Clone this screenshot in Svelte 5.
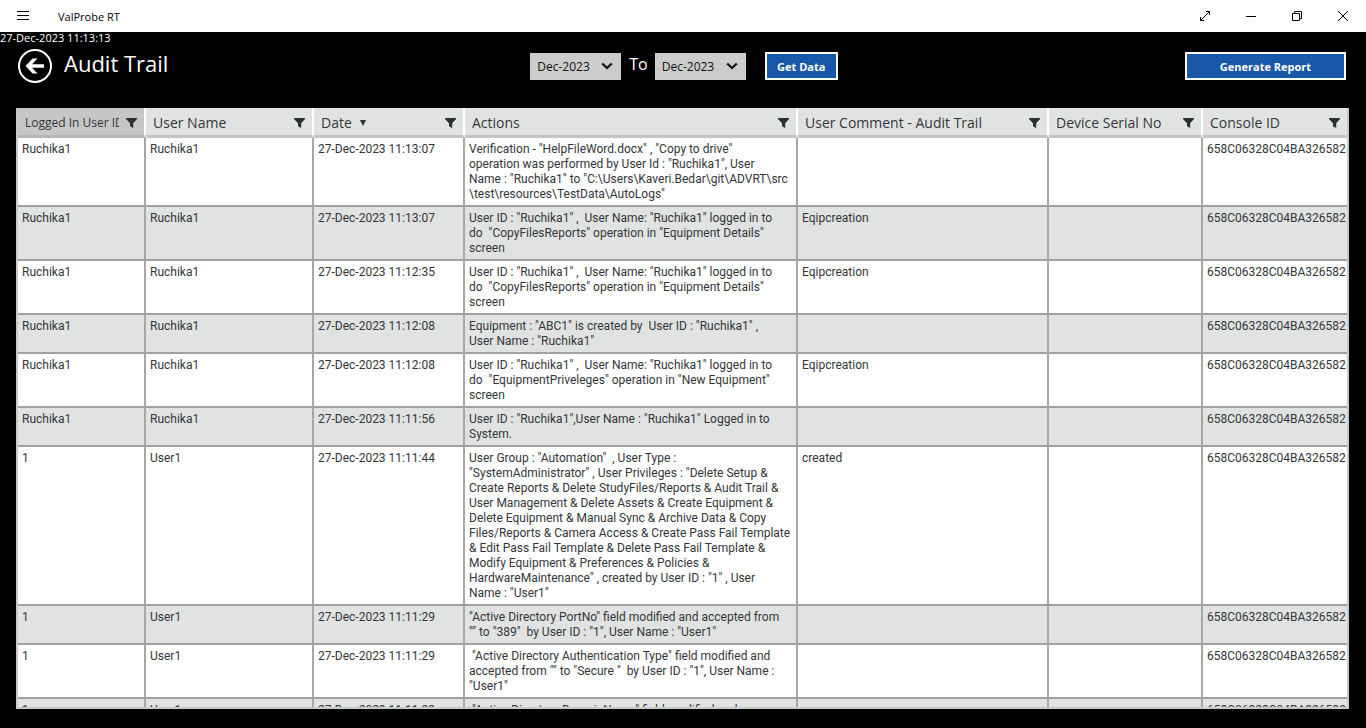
<script>
  const months = ['Oct-2023', 'Nov-2023', 'Dec-2023'];
  let from = $state('Dec-2023');
  let to = $state('Dec-2023');

  const columns = [
    { name: 'Logged In User ID', cls: 'c-id', active: true },
    { name: 'User Name', cls: 'c-name' },
    { name: 'Date', cls: 'c-date', sorted: true },
    { name: 'Actions', cls: 'c-actions' },
    { name: 'User Comment - Audit Trail', cls: 'c-comment' },
    { name: 'Device Serial No', cls: 'c-serial' },
    { name: 'Console ID', cls: 'c-console' }
  ];

  const consoleId = '658C06328C04BA326582';

  const rows = [
    { id: 'Ruchika1', user: 'Ruchika1', time: '11:13:07', comment: '', action: [
      'Verification - "HelpFileWord.docx" , "Copy to drive"',
      'operation was performed by User Id : "Ruchika1", User',
      'Name : "Ruchika1" to "C:\\Users\\Kaveri.Bedar\\git\\ADVRT\\src',
      '\\test\\resources\\TestData\\AutoLogs"'
    ] },
    { id: 'Ruchika1', user: 'Ruchika1', time: '11:13:07', comment: 'Eqipcreation', action: [
      'User ID : "Ruchika1" ,  User Name: "Ruchika1" logged in to',
      'do  "CopyFilesReports" operation in "Equipment Details"',
      'screen'
    ] },
    { id: 'Ruchika1', user: 'Ruchika1', time: '11:12:35', comment: 'Eqipcreation', action: [
      'User ID : "Ruchika1" ,  User Name: "Ruchika1" logged in to',
      'do  "CopyFilesReports" operation in "Equipment Details"',
      'screen'
    ] },
    { id: 'Ruchika1', user: 'Ruchika1', time: '11:12:08', comment: '', action: [
      'Equipment : "ABC1" is created by  User ID : "Ruchika1" ,',
      'User Name : "Ruchika1"'
    ] },
    { id: 'Ruchika1', user: 'Ruchika1', time: '11:12:08', comment: 'Eqipcreation', action: [
      'User ID : "Ruchika1" ,  User Name: "Ruchika1" logged in to',
      'do  "EquipmentPriveleges" operation in "New Equipment"',
      'screen'
    ] },
    { id: 'Ruchika1', user: 'Ruchika1', time: '11:11:56', comment: '', action: [
      'User ID : "Ruchika1",User Name : "Ruchika1" Logged in to',
      'System.'
    ] },
    { id: '1', user: 'User1', time: '11:11:44', comment: 'created', action: [
      'User Group : "Automation"  , User Type :',
      '"SystemAdministrator" , User Privileges : "Delete Setup &',
      'Create Reports & Delete StudyFiles/Reports & Audit Trail &',
      'User Management & Delete Assets & Create Equipment &',
      'Delete Equipment & Manual Sync & Archive Data & Copy',
      'Files/Reports & Camera Access & Create Pass Fail Template',
      '& Edit Pass Fail Template & Delete Pass Fail Template &',
      'Modify Equipment & Preferences & Policies &',
      'HardwareMaintenance" , created by User ID : "1" , User',
      'Name : "User1"'
    ] },
    { id: '1', user: 'User1', time: '11:11:29', comment: '', action: [
      '"Active Directory PortNo" field modified and accepted from',
      '"" to "389"  by User ID : "1", User Name : "User1"'
    ] },
    { id: '1', user: 'User1', time: '11:11:29', comment: '', action: [
      ' "Active Directory Authentication Type" field modified and',
      'accepted from "" to "Secure "  by User ID : "1", User Name :',
      '"User1"'
    ] },
    { id: '1', user: 'User1', time: '11:11:29', comment: '', action: [
      ' "Active Directory DomainName" field modified and',
      'accepted from "" to ""  by User ID : "1", User Name : "User1"'
    ] }
  ];
</script>

{#snippet chevron()}
  <svg class="chevron" width="12" height="8" viewBox="0 0 12 8" aria-hidden="true">
    <path d="M1.2 1.5 6 6 10.8 1.5" fill="none" stroke="#111" stroke-width="2.2" />
  </svg>
{/snippet}

<div class="app">
  <header class="titlebar">
    <button class="menu" aria-label="Menu">
      <svg width="12" height="10" viewBox="0 0 12 10" shape-rendering="crispEdges">
        <path d="M0 .5h12M0 4.5h12M0 8.5h12" stroke="#000" />
      </svg>
    </button>
    <span class="app-name">ValProbe RT</span>
    <div class="window-controls">
      <button aria-label="Full screen">
        <svg width="12" height="12" viewBox="0 0 12 12">
          <path d="M1.500 10.500 10.500 1.500M7 1.500h3.500V5M1.500 7v3.500H5" fill="none" stroke="#000" />
        </svg>
      </button>
      <button aria-label="Minimize">
        <svg width="10" height="10" viewBox="0 0 10 10"><path d="M0 5.5h10" stroke="#000" /></svg>
      </button>
      <button aria-label="Restore">
        <svg width="10" height="10" viewBox="0 0 10 10">
          <path d="M.5 2.5h7v7h-7zM2.500 2.500v-2h7v7h-2" fill="none" stroke="#000" />
        </svg>
      </button>
      <button aria-label="Close">
        <svg width="10" height="10" viewBox="0 0 10 10"><path d="M0 0 10 10M10 0 0 10" stroke="#000" /></svg>
      </button>
    </div>
  </header>

  <time class="clock">27-Dec-2023 11:13:13</time>

  <div class="toolbar">
    <div class="heading">
      <button class="back" aria-label="Back">
        <svg width="34" height="34" viewBox="0 0 34 34">
          <circle cx="17" cy="17" r="16" fill="none" stroke="#fff" stroke-width="2" />
          <path d="M7.500 17 14.500 9.500H19.500L14 15.200H26V18.800H14L19.500 24.500H14.500z" fill="#fff" />
        </svg>
      </button>
      <h1>Audit Trail</h1>
    </div>
    <div class="range">
      <span class="select">
        <select aria-label="From month" bind:value={from}>
          {#each months as m}<option>{m}</option>{/each}
        </select>
        {@render chevron()}
      </span>
      <label class="to" for="to-month">To</label>
      <span class="select">
        <select id="to-month" bind:value={to}>
          {#each months as m}<option>{m}</option>{/each}
        </select>
        {@render chevron()}
      </span>
      <button class="primary get">Get Data</button>
    </div>
    <button class="primary report">Generate Report</button>
  </div>

  <main class="grid">
    <table>
      <colgroup>
        {#each columns as c}<col class={c.cls} />{/each}
      </colgroup>
      <thead>
        <tr>
          {#each columns as c}
            <th class:active={c.active} scope="col">
              <div class="head">
                <span class="label">{c.name}</span>
                {#if c.sorted}
                  <svg class="sort" width="6" height="6" viewBox="0 0 6 6" aria-hidden="true"><path d="M0 0h6L3 6z" fill="#2f3335" /></svg>
                {/if}
                <button class="filter" aria-label="Filter {c.name}">
                  <svg width="11" height="10" viewBox="0 0 11 10">
                    <path d="M0 0H11V1L7.200 5.200V10L4 8.200V5.200L0 1z" fill="#2b3033" />
                  </svg>
                </button>
              </div>
            </th>
          {/each}
        </tr>
      </thead>
      <tbody>
        {#each rows as r}
          <tr>
            <td>{r.id}</td>
            <td>{r.user}</td>
            <td>27-Dec-2023 {r.time}</td>
            <td>{r.action.join('\n')}</td>
            <td>{r.comment}</td>
            <td></td>
            <td>{consoleId}</td>
          </tr>
        {/each}
      </tbody>
    </table>
  </main>
</div>

<style>
  :global(body) {
    margin: 0;
    background: #000;
  }
  .app {
    display: flex;
    flex-direction: column;
    height: 100vh;
    box-sizing: border-box;
    padding-bottom: 19px;
    background: #000;
    color: #fff;
    font-family: 'Open Sans', 'Noto Sans', sans-serif;
    font-size: 12px;
  }
  button {
    padding: 0;
    border: 0;
    background: none;
    color: inherit;
    font: inherit;
    cursor: pointer;
  }
  svg {
    display: block;
  }

  .titlebar {
    display: flex;
    align-items: center;
    flex: none;
    height: 32px;
    background: #fff;
    color: #000;
  }
  .menu {
    display: grid;
    place-items: center;
    width: 46px;
    height: 32px;
  }
  .app-name {
    padding-left: 12px;
    font-size: 11px;
  }
  .window-controls {
    display: flex;
    margin-left: auto;
  }
  .window-controls button {
    display: grid;
    place-items: center;
    width: 46px;
    height: 32px;
  }

  .clock {
    flex: none;
    font-size: 11px;
    line-height: 12px;
  }

  .toolbar {
    display: grid;
    grid-template-columns: 1fr auto 1fr;
    align-items: center;
    flex: none;
    height: 44px;
    padding: 0 20px 20px 18px;
  }
  .heading {
    display: flex;
    align-items: center;
    gap: 12px;
  }
  h1 {
    margin: 0;
    padding-bottom: 6px;
    font-size: 22px;
    line-height: 30px;
    font-weight: 400;
  }
  .range {
    display: flex;
    align-items: center;
    margin-left: 4px;
  }
  .select {
    display: grid;
    align-items: center;
  }
  .select > :global(*) {
    grid-area: 1 / 1;
  }
  select {
    appearance: none;
    width: 91px;
    height: 27px;
    padding: 0 7px;
    border: 0;
    border-radius: 0;
    background: #ccc;
    color: #111;
    font: inherit;
  }
  .chevron {
    justify-self: end;
    margin-right: 8px;
    pointer-events: none;
  }
  .to {
    padding: 0 7px 4px 8px;
    font-size: 16px;
    line-height: 22px;
  }
  .primary {
    height: 28px;
    border: 2px solid #fff;
    background: #1858a8;
    color: #fff;
    font-size: 11px;
    font-weight: 700;
  }
  .get {
    width: 73px;
    margin-left: 19px;
  }
  .report {
    justify-self: end;
    width: 161px;
  }

  .grid {
    flex: 1;
    min-height: 0;
    overflow: auto;
    scrollbar-width: none;
    margin: 0 17px 0 16px;
    border: solid #c8c9c9;
    border-width: 0 2px 2px;
    background: #fff;
    color: #333638;
  }
  table {
    width: 100%;
    table-layout: fixed;
    border-collapse: separate;
    border-spacing: 0;
  }
  .c-id { width: 128px; }
  .c-name { width: 168px; }
  .c-date { width: 151px; }
  .c-actions { width: 333px; }
  .c-serial { width: 154px; }
  .c-console { width: 144px; }

  thead th {
    position: sticky;
    top: 0;
    padding: 0;
    border-right: 2px solid #fff;
    border-bottom: 3px solid #c4c4c4;
    background: #e1e3e2;
    font-size: 14px;
    font-weight: 400;
    text-align: left;
  }
  thead th.active {
    border-bottom-color: #b4b4b4;
    background: #c6c6c6;
    font-size: 12px;
  }
  .head {
    display: flex;
    align-items: center;
    height: 25px;
    padding: 2px 7px 0;
  }
  .label {
    overflow: hidden;
    white-space: nowrap;
    line-height: 20px;
  }
  .active .label {
    flex: 0 1 94px;
  }
  .sort {
    flex: none;
    margin-left: 8px;
  }
  .filter {
    flex: none;
    margin-left: auto;
  }

  td {
    overflow: hidden;
    padding: 4px 0 3px 4px;
    border-right: 2px solid #a6a7a7;
    border-bottom: 2px solid #a0a1a1;
    font-family: Roboto, 'Open Sans', sans-serif;
    line-height: 15px;
    vertical-align: top;
    white-space: pre;
  }
  th:last-child,
  td:last-child {
    border-right: 0;
  }
  tbody tr:nth-child(even) {
    background: #e1e3e2;
  }
</style>
